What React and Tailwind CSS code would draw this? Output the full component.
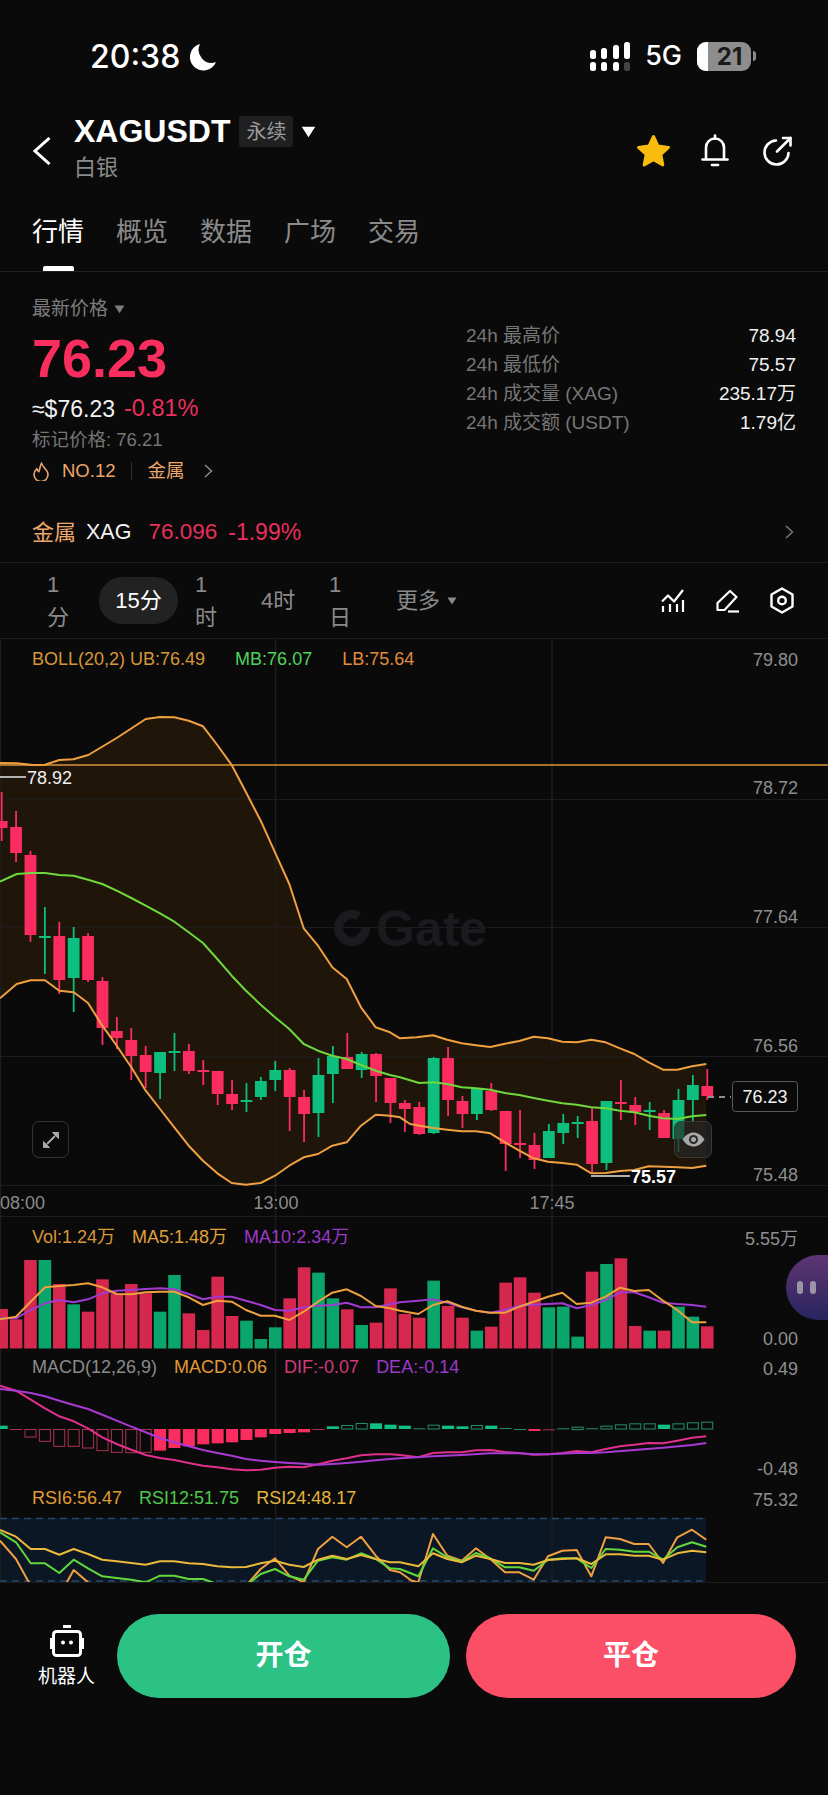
import React from 'react';

// candles in page coords: wick top, body top, body bottom, wick bottom, colour
const candles = [
  [793, 822, 829, 842, 'r'], [812, 828, 854, 863, 'r'], [852, 856, 936, 943, 'r'], [908, 937, 939, 975, 'g'],
  [923, 937, 981, 995, 'r'], [928, 939, 979, 1013, 'g'], [934, 937, 981, 983, 'r'], [978, 982, 1029, 1046, 'r'],
  [1018, 1032, 1039, 1050, 'r'], [1029, 1041, 1057, 1081, 'r'], [1047, 1056, 1073, 1089, 'r'], [1053, 1053, 1074, 1100, 'g'],
  [1034, 1052, 1054, 1072, 'g'], [1045, 1052, 1072, 1075, 'r'], [1061, 1071, 1073, 1086, 'r'], [1072, 1072, 1095, 1106, 'r'],
  [1081, 1095, 1105, 1111, 'r'], [1084, 1101, 1103, 1113, 'g'], [1078, 1082, 1098, 1101, 'g'], [1062, 1071, 1081, 1092, 'g'],
  [1069, 1071, 1098, 1132, 'r'], [1091, 1098, 1115, 1143, 'r'], [1059, 1076, 1114, 1138, 'g'], [1047, 1057, 1075, 1104, 'g'],
  [1034, 1058, 1070, 1070, 'r'], [1053, 1055, 1071, 1079, 'g'], [1054, 1055, 1077, 1103, 'r'], [1079, 1079, 1104, 1124, 'r'],
  [1101, 1104, 1110, 1133, 'r'], [1103, 1108, 1135, 1136, 'r'], [1058, 1059, 1134, 1135, 'g'], [1048, 1059, 1101, 1117, 'r'],
  [1097, 1102, 1115, 1129, 'r'], [1089, 1090, 1115, 1121, 'g'], [1084, 1092, 1111, 1112, 'r'], [1112, 1112, 1145, 1172, 'r'],
  [1111, 1144, 1146, 1159, 'r'], [1134, 1146, 1161, 1170, 'r'], [1125, 1132, 1159, 1159, 'g'], [1115, 1124, 1134, 1145, 'g'],
  [1117, 1123, 1125, 1139, 'g'], [1108, 1122, 1165, 1173, 'r'], [1102, 1102, 1164, 1171, 'g'], [1081, 1103, 1105, 1121, 'r'],
  [1098, 1106, 1113, 1126, 'r'], [1103, 1111, 1113, 1131, 'g'], [1111, 1114, 1139, 1139, 'r'], [1090, 1101, 1140, 1153, 'g'],
  [1076, 1086, 1101, 1123, 'g'], [1070, 1087, 1097, 1101, 'r'],
];

const candleX = (i) => 1.67 + 14.4 * i;

// volume bar tops, measured from the 3x crops (y = 1210 + top / 3)
const volumes = [
  [297, 'r'], [328, 'r'], [150, 'r'], [150, 'g'], [222, 'r'], [283, 'g'], [305, 'r'], [208, 'r'], [250, 'r'], [222, 'r'],
  [250, 'r'], [305, 'g'], [195, 'g'], [310, 'r'], [360, 'r'], [200, 'r'], [318, 'r'], [332, 'g'], [387, 'g'], [352, 'g'],
  [265, 'r'], [172, 'r'], [188, 'g'], [265, 'g'], [298, 'r'], [345, 'g'], [338, 'r'], [235, 'r'], [312, 'r'], [323, 'r'],
  [212, 'g'], [288, 'r'], [323, 'r'], [362, 'g'], [350, 'r'], [218, 'r'], [202, 'r'], [248, 'r'], [292, 'g'], [290, 'g'],
  [380, 'g'], [185, 'r'], [162, 'g'], [145, 'r'], [348, 'r'], [362, 'g'], [362, 'r'], [290, 'g'], [320, 'g'], [349, 'r'],
];

// macd histogram: top, bottom (crop px, y = 1370 + v / 3), kind: f filled, h hollow, l thin line
const macd = [
  [170, 180, 'g', 'f'], [180, 181, 'r', 'l'], [180, 204, 'r', 'h'], [180, 217, 'r', 'h'], [180, 232, 'r', 'h'],
  [180, 232, 'r', 'h'], [180, 237, 'r', 'h'], [180, 245, 'r', 'h'], [180, 250, 'r', 'h'], [180, 251, 'r', 'h'],
  [180, 250, 'r', 'h'], [180, 245, 'r', 'f'], [180, 237, 'r', 'f'], [180, 232, 'r', 'f'], [180, 226, 'r', 'f'],
  [180, 223, 'r', 'f'], [180, 220, 'r', 'f'], [180, 213, 'r', 'f'], [180, 205, 'r', 'f'], [180, 195, 'r', 'f'],
  [180, 192, 'r', 'f'], [180, 190, 'r', 'f'], [180, 181, 'r', 'l'], [172, 180, 'g', 'f'], [168, 180, 'g', 'h'],
  [162, 180, 'g', 'h'], [163, 180, 'g', 'f'], [167, 180, 'g', 'f'], [170, 180, 'g', 'f'], [178, 179, 'g', 'l'],
  [167, 180, 'g', 'h'], [170, 180, 'g', 'f'], [172, 180, 'g', 'f'], [168, 180, 'g', 'h'], [170, 180, 'g', 'f'],
  [177, 178, 'g', 'l'], [180, 180, 'g', 'l'], [180, 186, 'r', 'f'], [181, 182, 'r', 'l'], [178, 179, 'g', 'l'],
  [173, 182, 'g', 'h'], [178, 179, 'g', 'l'], [170, 180, 'g', 'h'], [166, 180, 'g', 'h'], [163, 180, 'g', 'h'],
  [163, 180, 'g', 'h'], [167, 180, 'g', 'f'], [163, 180, 'g', 'h'], [160, 180, 'g', 'h'], [158, 180, 'g', 'h'],
];

// line series: each is [x offset, y offset, crop points]
const toPoints = (parts) =>
  parts.flatMap(([ox, oy, list]) => list.map(([x, y]) => [ox + x / 3, oy + y / 3]));
const str = (pts) => pts.map(([x, y]) => `${x.toFixed(1)},${y.toFixed(1)}`).join(' ');

const upper = toPoints([
  [0, 640, [[0, 372], [50, 373], [100, 378], [135, 377], [178, 363], [220, 361], [265, 348], [350, 297], [437, 240], [480, 234], [523, 235], [566, 245], [609, 262], [652, 318], [695, 378], [738, 460], [782, 545], [825, 640], [868, 735], [911, 868], [954, 920], [997, 985], [1040, 1020], [1083, 1105], [1127, 1165]]],
  [0, 940, [[1170, 280]]],
  [400, 1000, [[0, 118], [50, 115], [99, 109], [142, 122], [185, 133], [228, 139], [271, 144], [315, 134], [358, 126], [401, 113], [444, 118], [487, 128], [530, 130], [574, 122], [617, 130], [660, 148], [703, 165], [746, 190], [789, 212], [832, 212], [876, 202], [919, 195]]],
]);

const lower = toPoints([
  [0, 940, [[0, 178], [50, 135], [92, 124], [135, 124], [178, 155], [221, 160], [264, 192], [307, 260], [350, 320], [394, 385], [437, 455], [480, 510], [523, 565], [566, 620], [609, 665], [652, 703], [695, 732], [738, 737], [782, 732], [825, 710], [868, 680], [911, 655], [954, 645], [997, 620], [1040, 610], [1083, 560], [1127, 527], [1170, 530]]],
  [400, 1000, [[0, 355], [30, 375], [99, 387], [142, 392], [185, 397], [228, 397], [271, 403], [315, 430], [358, 455], [401, 478], [444, 488], [487, 492], [530, 497], [574, 523], [617, 522], [660, 516], [703, 513], [746, 502], [789, 503], [832, 505], [876, 507], [919, 500]]],
]);

const middle = toPoints([
  [0, 640, [[0, 728], [50, 705], [92, 702], [135, 702], [178, 708], [221, 710], [264, 722], [307, 735], [350, 755], [394, 777], [437, 800], [480, 823], [523, 848], [566, 880], [609, 912], [652, 960], [695, 1010], [738, 1055], [782, 1097], [825, 1135], [868, 1170]]],
  [0, 940, [[911, 315], [954, 335], [997, 350], [1040, 360], [1083, 378], [1127, 395], [1170, 408]]],
  [400, 1000, [[0, 235], [58, 252], [99, 250], [142, 255], [185, 265], [228, 268], [271, 272], [315, 282], [358, 288], [401, 297], [444, 305], [487, 313], [530, 317], [574, 325], [617, 328], [660, 335], [703, 340], [746, 350], [789, 358], [832, 360], [876, 352], [919, 348]]],
]);

const ma5 = toPoints([
  [0, 1210, [[0, 328], [48, 320], [92, 275], [135, 232], [178, 228], [221, 225], [264, 220], [307, 232], [350, 252], [394, 253], [437, 247], [480, 245], [523, 245], [566, 262], [609, 285], [652, 272], [695, 275], [738, 300], [782, 317], [825, 317], [868, 330], [911, 305], [954, 275], [997, 248], [1040, 238], [1083, 258], [1127, 288], [1170, 295]]],
  [400, 1210, [[0, 302], [55, 312], [99, 285], [142, 274], [185, 290], [228, 302], [271, 308], [315, 308], [358, 290], [401, 275], [444, 260], [487, 248], [530, 282], [574, 278], [617, 260], [660, 233], [703, 243], [746, 240], [789, 272], [832, 300], [876, 337], [919, 337]]],
]);

const ma10 = toPoints([
  [0, 1210, [[0, 325], [48, 325], [92, 300], [135, 280], [178, 270], [221, 277], [264, 268], [307, 250], [350, 242], [394, 240], [437, 237], [480, 235], [523, 238], [566, 252], [609, 268], [652, 260], [695, 260], [738, 272], [782, 285], [825, 300], [868, 302], [911, 292], [954, 287], [997, 285], [1040, 278], [1083, 292], [1127, 292], [1170, 283]]],
  [400, 1210, [[0, 277], [55, 272], [99, 268], [142, 278], [185, 292], [228, 302], [271, 308], [315, 300], [358, 287], [401, 284], [444, 282], [487, 280], [530, 295], [574, 285], [617, 270], [660, 247], [703, 247], [746, 262], [789, 278], [832, 282], [876, 285], [919, 290]]],
]);

const dif = toPoints([
  [0, 1370, [[0, 50], [48, 65], [92, 92], [135, 118], [178, 142], [221, 157], [264, 178], [307, 205], [350, 225], [394, 242], [437, 258], [480, 267], [523, 273], [566, 282], [609, 290], [652, 295], [695, 301], [738, 304], [782, 302], [825, 296], [868, 293], [911, 295], [954, 286], [997, 275], [1040, 268], [1083, 259], [1127, 256], [1170, 256]]],
  [400, 1370, [[0, 258], [55, 265], [99, 252], [142, 250], [185, 250], [228, 244], [271, 243], [315, 249], [358, 252], [401, 257], [444, 256], [487, 252], [530, 246], [574, 250], [617, 240], [660, 232], [703, 227], [746, 222], [789, 223], [832, 215], [876, 206], [919, 202]]],
]);

const dea = toPoints([
  [0, 1370, [[0, 60], [48, 65], [92, 72], [135, 82], [178, 95], [221, 108], [264, 120], [307, 137], [350, 155], [394, 173], [437, 190], [480, 207], [523, 220], [566, 232], [609, 243], [652, 252], [695, 260], [738, 270], [782, 275], [825, 279], [868, 282], [911, 284], [954, 287], [997, 285], [1040, 282], [1083, 278], [1127, 274], [1170, 270]]],
  [400, 1370, [[0, 268], [99, 262], [185, 258], [271, 253], [358, 253], [401, 256], [444, 256], [530, 252], [574, 252], [617, 250], [703, 243], [789, 236], [876, 228], [919, 222]]],
]);

const rsi24 = toPoints([
  [0, 1370, [[0, 483], [48, 503], [92, 540], [135, 540], [178, 557], [221, 540], [264, 555], [307, 572], [350, 577], [394, 582], [437, 587], [480, 577], [523, 577], [566, 583], [609, 585], [652, 592], [695, 595], [738, 594], [782, 583], [825, 575], [868, 587], [911, 594], [954, 572], [997, 560], [1040, 570], [1083, 558], [1127, 570], [1170, 580]]],
  [400, 1370, [[0, 580], [55, 592], [99, 553], [142, 570], [185, 580], [228, 560], [271, 570], [315, 582], [358, 582], [401, 587], [444, 573], [487, 570], [530, 568], [574, 585], [617, 556], [660, 556], [703, 560], [746, 560], [789, 572], [832, 553], [876, 545], [919, 550]]],
]);

const rsi12 = toPoints([
  [0, 1370, [[0, 490], [48, 520], [92, 583], [135, 583], [178, 612], [221, 572], [264, 598], [307, 622], [350, 627], [394, 632], [437, 640], [480, 620], [523, 620], [566, 630], [609, 630], [652, 645], [695, 655], [738, 650], [782, 615], [825, 600], [868, 622], [911, 632], [954, 575], [997, 565], [1040, 572], [1083, 553], [1127, 570], [1170, 598]]],
  [400, 1370, [[0, 600], [55, 622], [99, 538], [142, 565], [185, 578], [228, 552], [271, 568], [315, 595], [358, 595], [401, 605], [444, 572], [487, 568], [530, 568], [574, 597], [617, 540], [660, 542], [703, 548], [746, 548], [789, 572], [832, 535], [876, 520], [919, 533]]],
]);

const rsi6 = toPoints([
  [0, 1370, [[0, 515], [48, 570], [92, 650], [135, 700], [178, 680], [221, 603], [264, 640], [307, 680], [350, 700], [394, 720], [437, 720], [480, 700], [523, 700], [566, 700], [609, 700], [652, 700], [695, 680], [738, 650], [782, 600], [825, 568], [868, 620], [911, 640], [954, 540], [997, 503], [1040, 535], [1083, 503], [1127, 560], [1170, 603]]],
  [400, 1370, [[0, 610], [35, 635], [55, 640], [99, 495], [142, 560], [185, 575], [228, 538], [271, 570], [315, 610], [358, 610], [401, 632], [444, 562], [487, 545], [530, 543], [574, 622], [617, 505], [660, 510], [703, 525], [746, 525], [789, 582], [832, 505], [876, 482], [919, 512]]],
]);

const Line = ({ pts, color, width = 2 }) => (
  <polyline points={str(pts)} fill="none" stroke={color} strokeWidth={width} strokeLinejoin="round" />
);

const GridV = ({ top, height }) => (
  <g stroke="#1d1d1d" strokeWidth="1.5">
    <line x1="0.5" x2="0.5" y1={top} y2={top + height} />
    <line x1="275.5" x2="275.5" y1={top} y2={top + height} />
    <line x1="552" x2="552" y1={top} y2={top + height} />
  </g>
);

const AxisLabel = ({ y, children }) => (
  <text x="798" y={y + 6.5} textAnchor="end" fill="#8f8f8f" fontSize="18">
    {children}
  </text>
);

function Pane({ top, height, className, children, legend }) {
  return (
    <div className={`relative ${className}`}>
      <svg className="absolute inset-0" width="828" height={height} viewBox={`0 ${top} 828 ${height}`}>
        {children}
      </svg>
      {legend}
    </div>
  );
}

function MainPane() {
  const red = '#fa2c60';
  const green = '#0cbf7e';
  return (
    <Pane
      top={640}
      height={577}
      className="h-[577px]"
      legend={
        <div className="relative flex gap-[30px] pl-[32px] pt-[8px] text-[18px] leading-[24px]">
          <span className="text-[#d8963a]">BOLL(20,2) UB:76.49</span>
          <span className="text-[#4fd35c]">MB:76.07</span>
          <span className="text-[#e28b3d]">LB:75.64</span>
        </div>
      }
    >
      <polygon points={str([...upper, ...[...lower].reverse()])} fill="#1f1609" />
      <GridV top={640} height={577} />
      {[800, 928, 1057, 1186].map((y) => (
        <line key={y} x1="0" x2="828" y1={y + 0.5} y2={y + 0.5} stroke="#1c1c1c" strokeWidth="1" />
      ))}

      {/* watermark */}
      <circle cx="352" cy="929" r="13.5" fill="none" stroke="#1a1b1e" strokeWidth="9" strokeDasharray="70 15" />
      <text x="376" y="947" fill="#1a1b1e" fontSize="50" fontWeight="700">
        Gate
      </text>

      <line x1="0" x2="828" y1="766" y2="766" stroke="#d9963a" strokeWidth="1.5" />

      {candles.map(([wt, bt, bb, wb, c], i) => {
        const x = candleX(i);
        const fill = c === 'r' ? red : green;
        return (
          <g key={i} fill={fill}>
            <rect x={x - 0.9} y={wt} width="1.8" height={wb - wt} />
            <rect x={x - 5.9} y={bt} width="11.8" height={bb - bt} />
          </g>
        );
      })}

      <Line pts={upper} color="#f0a040" />
      <Line pts={middle} color="#6fd83c" />
      <Line pts={lower} color="#f0a040" />

      <line x1="0" x2="26" y1="778" y2="778" stroke="#e8e8e8" strokeWidth="1.5" />
      <text x="27" y="784.5" fill="#f0f0f0" fontSize="18">78.92</text>
      <line x1="591" x2="630" y1="1177" y2="1177" stroke="#e8e8e8" strokeWidth="1.5" />
      <text x="631" y="1184" fill="#ffffff" fontSize="18" fontWeight="700">75.57</text>

      <line x1="708" x2="731" y1="1098" y2="1098" stroke="#bbbbbb" strokeWidth="1.5" strokeDasharray="6 5" />
      <rect x="732.5" y="1082.5" width="65" height="30" rx="3" fill="#0a0a0a" stroke="#5a5a5a" />
      <text x="765" y="1104" textAnchor="middle" fill="#f2f2f2" fontSize="18">76.23</text>

      <AxisLabel y={660}>79.80</AxisLabel>
      <AxisLabel y={788}>78.72</AxisLabel>
      <AxisLabel y={917}>77.64</AxisLabel>
      <AxisLabel y={1046}>76.56</AxisLabel>
      <AxisLabel y={1175}>75.48</AxisLabel>

      <text x="0" y="1209.5" fill="#8a8a8a" fontSize="18">08:00</text>
      <text x="276" y="1209.5" textAnchor="middle" fill="#8a8a8a" fontSize="18">13:00</text>
      <text x="552" y="1209.5" textAnchor="middle" fill="#8a8a8a" fontSize="18">17:45</text>
    </Pane>
  );
}

function VolPane() {
  return (
    <Pane
      top={1217}
      height={136}
      className="h-[136px] border-t border-[#1c1c1c]"
      legend={
        <div className="relative flex gap-[17px] pl-[32px] pt-[8px] text-[18px] leading-[24px]">
          <span className="text-[#d8963a]">Vol:1.24万</span>
          <span className="text-[#e0a03c]">MA5:1.48万</span>
          <span className="text-[#9d38cc]">MA10:2.34万</span>
        </div>
      }
    >
      <GridV top={1217} height={136} />
      {volumes.map(([t, c], i) => {
        const y = 1210 + t / 3;
        return (
          <rect
            key={i}
            x={candleX(i) - 6.3}
            y={y}
            width="12.6"
            height={1348.5 - y}
            fill={c === 'r' ? '#d6274f' : '#0aa56b'}
          />
        );
      })}
      <Line pts={ma10} color="#a03ad0" />
      <Line pts={ma5} color="#eea03c" />
      <AxisLabel y={1238}>5.55万</AxisLabel>
      <AxisLabel y={1338}>0.00</AxisLabel>
    </Pane>
  );
}

function MacdPane() {
  return (
    <Pane
      top={1353}
      height={130}
      className="h-[130px]"
      legend={
        <div className="relative flex gap-[17px] pl-[32px] pt-[3px] text-[18px] leading-[24px]">
          <span className="text-[#8a8a8a]">MACD(12,26,9)</span>
          <span className="text-[#e09a36]">MACD:0.06</span>
          <span className="text-[#d03a78]">DIF:-0.07</span>
          <span className="text-[#9d38cc]">DEA:-0.14</span>
        </div>
      }
    >
      <GridV top={1353} height={130} />
      {macd.map(([t, b, c, kind], i) => {
        const x = candleX(i) - 6;
        const y = 1370 + t / 3;
        const h = Math.max((b - t) / 3, 1);
        const color = c === 'r' ? '#fa2c60' : '#10c184';
        const dim = c === 'r' ? '#a83450' : '#23906a';
        if (kind === 'f') return <rect key={i} x={x} y={y} width="12" height={h} fill={color} />;
        if (kind === 'l') return <rect key={i} x={x} y={y} width="12" height="1" fill={dim} />;
        return <rect key={i} x={x + 0.5} y={y + 0.5} width="11" height={h - 0.5} fill="none" stroke={dim} strokeWidth="1" />;
      })}
      <Line pts={dif} color="#e0308c" />
      <Line pts={dea} color="#a83ad4" />
      <AxisLabel y={1369}>0.49</AxisLabel>
      <AxisLabel y={1469}>-0.48</AxisLabel>
    </Pane>
  );
}

function RsiPane() {
  return (
    <Pane
      top={1483}
      height={100}
      className="h-[100px]"
      legend={
        <div className="relative flex gap-[17px] pl-[32px] pt-[4px] text-[18px] leading-[24px]">
          <span className="text-[#e09a36]">RSI6:56.47</span>
          <span className="text-[#50c84c]">RSI12:51.75</span>
          <span className="text-[#e6b63c]">RSI24:48.17</span>
        </div>
      }
    >
      <rect x="0" y="1519" width="706" height="64" fill="#0b1724" />
      <GridV top={1483} height={100} />
      <line x1="0" x2="706" y1="1519.5" y2="1519.5" stroke="#27496e" strokeWidth="1.5" strokeDasharray="7 5" />
      <line x1="0" x2="706" y1="1582" y2="1582" stroke="#27496e" strokeWidth="1.5" strokeDasharray="7 5" />
      <Line pts={rsi6} color="#f0a040" />
      <Line pts={rsi12} color="#62d83c" />
      <Line pts={rsi24} color="#ecb93a" />
      <AxisLabel y={1500}>75.32</AxisLabel>
    </Pane>
  );
}

const Triangle = ({ className }) => (
  <svg className={className} viewBox="0 0 10 8">
    <path d="M0.5 0.5h9L5 7.5z" fill="currentColor" />
  </svg>
);

const Chevron = ({ className }) => (
  <svg className={className} viewBox="0 0 10 14" fill="none" stroke="currentColor" strokeWidth="1.5">
    <path d="M2 1l6.5 6L2 13" />
  </svg>
);

function StatusBar() {
  return (
    <div className="flex h-[100px] items-start justify-between pl-[90px] pr-[72px] pt-[41px] text-white">
      <div className="flex items-center gap-[9px]">
        <span className="font-['Inter',sans-serif] text-[32px] font-medium leading-[32px]">20:38</span>
        <svg width="28" height="28" viewBox="0 0 28 28">
          <path d="M11 1A13.5 13.5 0 1 0 27 19 13 13 0 0 1 11 1z" fill="#fff" />
        </svg>
      </div>
      <div className="flex items-center">
        <svg width="41" height="29" viewBox="0 0 41 29" fill="#fff">
          <rect x="0" y="8" width="6" height="9" rx="2.5" />
          <rect x="0" y="20" width="6" height="9" rx="2.5" />
          <rect x="11" y="6" width="6" height="11" rx="2.5" />
          <rect x="11" y="20" width="6" height="9" rx="2.5" />
          <rect x="23" y="3" width="6" height="14" rx="2.5" />
          <rect x="23" y="20" width="6" height="9" rx="2.5" />
          <rect x="34" y="0" width="6" height="17" rx="2.5" />
          <rect x="34" y="20" width="6" height="9" rx="2.5" fill="#444" />
        </svg>
        <span className="ml-[14px] font-['Inter',sans-serif] text-[27px] font-medium leading-[30px]">5G</span>
        <div className="ml-[15px] flex items-center">
          <div className="relative flex h-[29px] w-[54px] overflow-hidden rounded-[9px] bg-[#8d8d8d]">
            <div className="h-full w-[11px] bg-white" />
            <span className="w-[43px] text-center font-['Inter',sans-serif] text-[24px] font-bold leading-[29px] text-[#1a1a1a]">21</span>
          </div>
          <div className="ml-[2px] h-[10px] w-[3px] rounded-r-full bg-[#8d8d8d]" />
        </div>
      </div>
    </div>
  );
}

function Header() {
  return (
    <div className="flex h-[104px] items-start justify-between pl-[33px] pr-[35px] pt-[16px]">
      <div className="flex items-start">
        <svg className="mt-[21px]" width="18" height="28" viewBox="0 0 18 28" fill="none" stroke="#fff" strokeWidth="3">
          <path d="M16.5 1L2 14l14.5 13" />
        </svg>
        <div className="ml-[23px]">
          <div className="flex items-center">
            <span className="text-[32px] font-bold leading-[31px] text-white">XAGUSDT</span>
            <span className="ml-[9px] flex h-[31px] w-[54px] items-center justify-center rounded-[3px] bg-[#202020] text-[20px] text-[#9a9a9a]">永续</span>
            <Triangle className="ml-[8px] w-[15px] text-white" />
          </div>
          <div className="mt-[8px] text-[22px] leading-[26px] text-[#8a8a8a]">白银</div>
        </div>
      </div>
      <div className="mt-[18px] flex items-center">
        <svg width="35" height="33" viewBox="0 0 35 33">
          <path
            d="M17.5 2.5l4.5 9.6 10.5 1.3-7.7 7.1 2 10.4-9.3-5.2-9.3 5.2 2-10.4-7.7-7.1 10.5-1.3z"
            fill="#f9bc0d"
            stroke="#f9bc0d"
            strokeWidth="3"
            strokeLinejoin="round"
          />
        </svg>
        <svg className="ml-[30px]" width="28" height="33" viewBox="0 0 28 33" fill="none" stroke="#fff" strokeWidth="2.6" strokeLinecap="round">
          <path d="M14 1.5v3" />
          <path d="M5 25V13.5a9 9 0 0 1 18 0V25" />
          <path d="M1.5 25.5h25" />
          <path d="M11 31h6" />
        </svg>
        <svg className="ml-[33px]" width="31" height="30" viewBox="0 0 31 30" fill="none" stroke="#fff" strokeWidth="2.6" strokeLinecap="round" strokeLinejoin="round">
          <path d="M14 4.5A12 12 0 1 0 26.5 17" />
          <path d="M15 15.5L28.5 2" />
          <path d="M21 2h7.5v7.5" />
        </svg>
      </div>
    </div>
  );
}

function Tabs() {
  const tabs = ['行情', '概览', '数据', '广场', '交易'];
  return (
    <div className="flex h-[68px] gap-[32px] border-b border-[#222222] pl-[32px]">
      {tabs.map((t, i) => (
        <div key={t} className="flex flex-col items-center">
          <span className={`mt-[12px] text-[26px] leading-[32px] ${i === 0 ? 'text-white' : 'text-[#8a8a8a]'}`}>{t}</span>
          {i === 0 && <div className="mt-auto h-[5px] w-[31px] rounded-t-[2px] bg-white" />}
        </div>
      ))}
    </div>
  );
}

function StatRow({ label, value }) {
  return (
    <div className="flex h-[29px] items-center justify-between text-[19px]">
      <span className="text-[#767676]">{label}</span>
      <span className="text-[#f0f0f0]">{value}</span>
    </div>
  );
}

function PriceInfo() {
  return (
    <div className="flex justify-between pl-[32px] pr-[32px]">
      <div>
        <div className="mt-[23px] flex h-[28px] items-center text-[19px] text-[#7c7c7c]">
          最新价格
          <Triangle className="ml-[6px] w-[11px]" />
        </div>
        <div className="mt-[5px] text-[54px] font-bold leading-[60px] text-[#fa2d5f]">76.23</div>
        <div className="mt-[7px] flex h-[28px] items-center">
          <span className="text-[23px] text-[#f2f2f2]">≈$76.23</span>
          <span className="ml-[9px] text-[23.5px] text-[#ee2e5d]">-0.81%</span>
        </div>
        <div className="mt-[4px] h-[26px] text-[18.5px] leading-[26px] text-[#767676]">标记价格: 76.21</div>
        <div className="mb-[19px] mt-[5px] flex h-[26px] items-center text-[18.5px] text-[#eba76c]">
          <svg width="18" height="19" viewBox="0 0 18 19" fill="none" stroke="currentColor" strokeWidth="1.6" strokeLinejoin="round">
            <path d="M9.5 1c.6 4 6.5 6.8 6.5 11.5a7 7 0 0 1-14 0c0-2.600 1.300-4.300 3-5.800.3 1.800.9 2.800 1.900 3C7.800 7.300 8 4 9.500 1z" />
          </svg>
          <span className="ml-[12px]">NO.12</span>
          <span className="ml-[16px] h-[18px] w-px bg-[#333333]" />
          <span className="ml-[15px]">金属</span>
          <Chevron className="ml-[19px] h-[14px] w-[10px] text-[#8a8a8a]" />
        </div>
      </div>
      <div className="mt-[50px] w-[330px]">
        <StatRow label="24h 最高价" value="78.94" />
        <StatRow label="24h 最低价" value="75.57" />
        <StatRow label="24h 成交量 (XAG)" value="235.17万" />
        <StatRow label="24h 成交额 (USDT)" value="1.79亿" />
      </div>
    </div>
  );
}

function IndexRow() {
  return (
    <div className="flex h-[60px] items-center border-b border-[#1c1c1c] pb-[1px] pl-[32px] pr-[34px]">
      <span className="text-[22px] text-[#eba76c]">金属</span>
      <span className="ml-[10px] text-[21.500px] text-[#f2f2f2]">XAG</span>
      <span className="ml-[17px] text-[22.500px] text-[#e62f5c]">76.096</span>
      <span className="ml-[11px] text-[23px] text-[#e62f5c]">-1.99%</span>
      <Chevron className="ml-auto h-[14px] w-[10px] text-[#777777]" />
    </div>
  );
}

function Intervals() {
  return (
    <div className="flex h-[76px] items-center border-b border-[#1c1c1c] pr-[34px] text-[22px] text-[#8a8a8a]">
      <span className="ml-[47px] w-[34px]">1分</span>
      <span className="ml-[18px] flex h-[47px] w-[79px] items-center justify-center rounded-full bg-[#222222] text-white">15分</span>
      <span className="ml-[17px] w-[34px]">1时</span>
      <span className="ml-[32px] w-[36px]">4时</span>
      <span className="ml-[32px] w-[34px]">1日</span>
      <span className="ml-[33px]">更多</span>
      <Triangle className="ml-[7px] w-[10px]" />
      <div className="ml-auto flex items-center gap-[30px]">
        <svg width="24" height="24" viewBox="0 0 24 24" fill="none" stroke="#fff" strokeWidth="2.200" strokeLinejoin="round">
          <path d="M1 12.500l6-6 6 6L22 1" />
          <path d="M2 17v6M9 15v8M16 15v8M22 11v12" />
        </svg>
        <svg width="25" height="24" viewBox="0 0 25 24" fill="none" stroke="#fff" strokeWidth="2.200" strokeLinejoin="round">
          <path d="M15 2l6.500 6-12 13H2.500v-7z" />
          <path d="M13 22.500h11" />
        </svg>
        <svg width="24" height="27" viewBox="0 0 24 27" fill="none" stroke="#fff" strokeWidth="2.400" strokeLinejoin="round">
          <path d="M12 1.500l10.500 6v12l-10.500 6-10.500-6v-12z" />
          <circle cx="12" cy="13.500" r="3.800" />
        </svg>
      </div>
    </div>
  );
}

function BottomBar() {
  return (
    <div className="flex items-start pl-[38px] pr-[32px] pt-[31px]">
      <div className="flex w-[57px] flex-col items-center pt-[11px]">
        <svg width="36" height="32" viewBox="0 0 36 32">
          <rect x="14" y="0" width="8" height="3" fill="#fff" />
          <rect x="4.500" y="6.500" width="27" height="24" rx="3" fill="none" stroke="#fff" strokeWidth="3" />
          <rect x="1" y="13" width="3" height="11" fill="#fff" />
          <rect x="32" y="13" width="3" height="11" fill="#fff" />
          <circle cx="14" cy="17.500" r="2" fill="#fff" />
          <circle cx="22" cy="17.500" r="2" fill="#fff" />
        </svg>
        <span className="mt-[8px] whitespace-nowrap text-[19px] leading-[24px] text-white">机器人</span>
      </div>
      <button className="ml-[22px] flex h-[84px] w-[333px] items-center justify-center rounded-[42px] bg-[#2cc285] text-[28px] font-bold text-white">开仓</button>
      <button className="ml-[16px] flex h-[84px] flex-1 items-center justify-center rounded-[42px] bg-[#fa4f66] text-[28px] font-bold text-white">平仓</button>
    </div>
  );
}

export default function App() {
  return (
    <div className="relative h-[1795px] w-[828px] overflow-hidden bg-[#0a0a0a] font-['Liberation_Sans','Noto_Sans_CJK_SC',sans-serif]">
      <StatusBar />
      <Header />
      <Tabs />
      <PriceInfo />
      <IndexRow />
      <Intervals />

      <div className="relative">
        <MainPane />
        <VolPane />
        <MacdPane />
        <RsiPane />

        {/* expand + hide buttons sit on top of the chart */}
        <div className="absolute left-[32px] top-[482px] flex h-[37px] w-[37px] items-center justify-center rounded-[7px] border border-[#333333]">
          <svg width="18" height="18" viewBox="0 0 18 18" fill="#a8a8a8" stroke="#a8a8a8">
            <path d="M10.500 1.500h6v6z" />
            <path d="M1.500 10.500v6h6z" />
            <path d="M13 5L5 13" strokeWidth="2" />
          </svg>
        </div>
        <div className="absolute left-[674px] top-[482px] flex h-[37px] w-[38px] items-center justify-center rounded-[7px] border border-[#3a3a3a] bg-[#262626]/70">
          <svg width="23" height="15" viewBox="0 0 23 15">
            <path d="M0.500 7.500C4 2.500 7.500 0.500 11.500 0.500s7.500 2 11 7c-3.500 5-7 7-11 7s-7.500-2-11-7z" fill="#a8a8a8" />
            <circle cx="11.500" cy="7.500" r="4.500" fill="#2a2a2a" />
            <circle cx="11.500" cy="7.500" r="2.500" fill="#a8a8a8" />
          </svg>
        </div>

        {/* floating assistant pill */}
        <div className="absolute left-[786px] top-[616px] flex h-[65px] w-[42px] items-center gap-[7px] rounded-l-full bg-gradient-to-b from-[#5f3572] to-[#28245f] pl-[11px]">
          <div className="h-[13px] w-[6px] rounded-full bg-[#9a95a8]" />
          <div className="h-[13px] w-[6px] rounded-full bg-[#9a95a8]" />
        </div>

        <div className="border-t border-[#1c1c1c]" />
      </div>

      <BottomBar />
    </div>
  );
}
